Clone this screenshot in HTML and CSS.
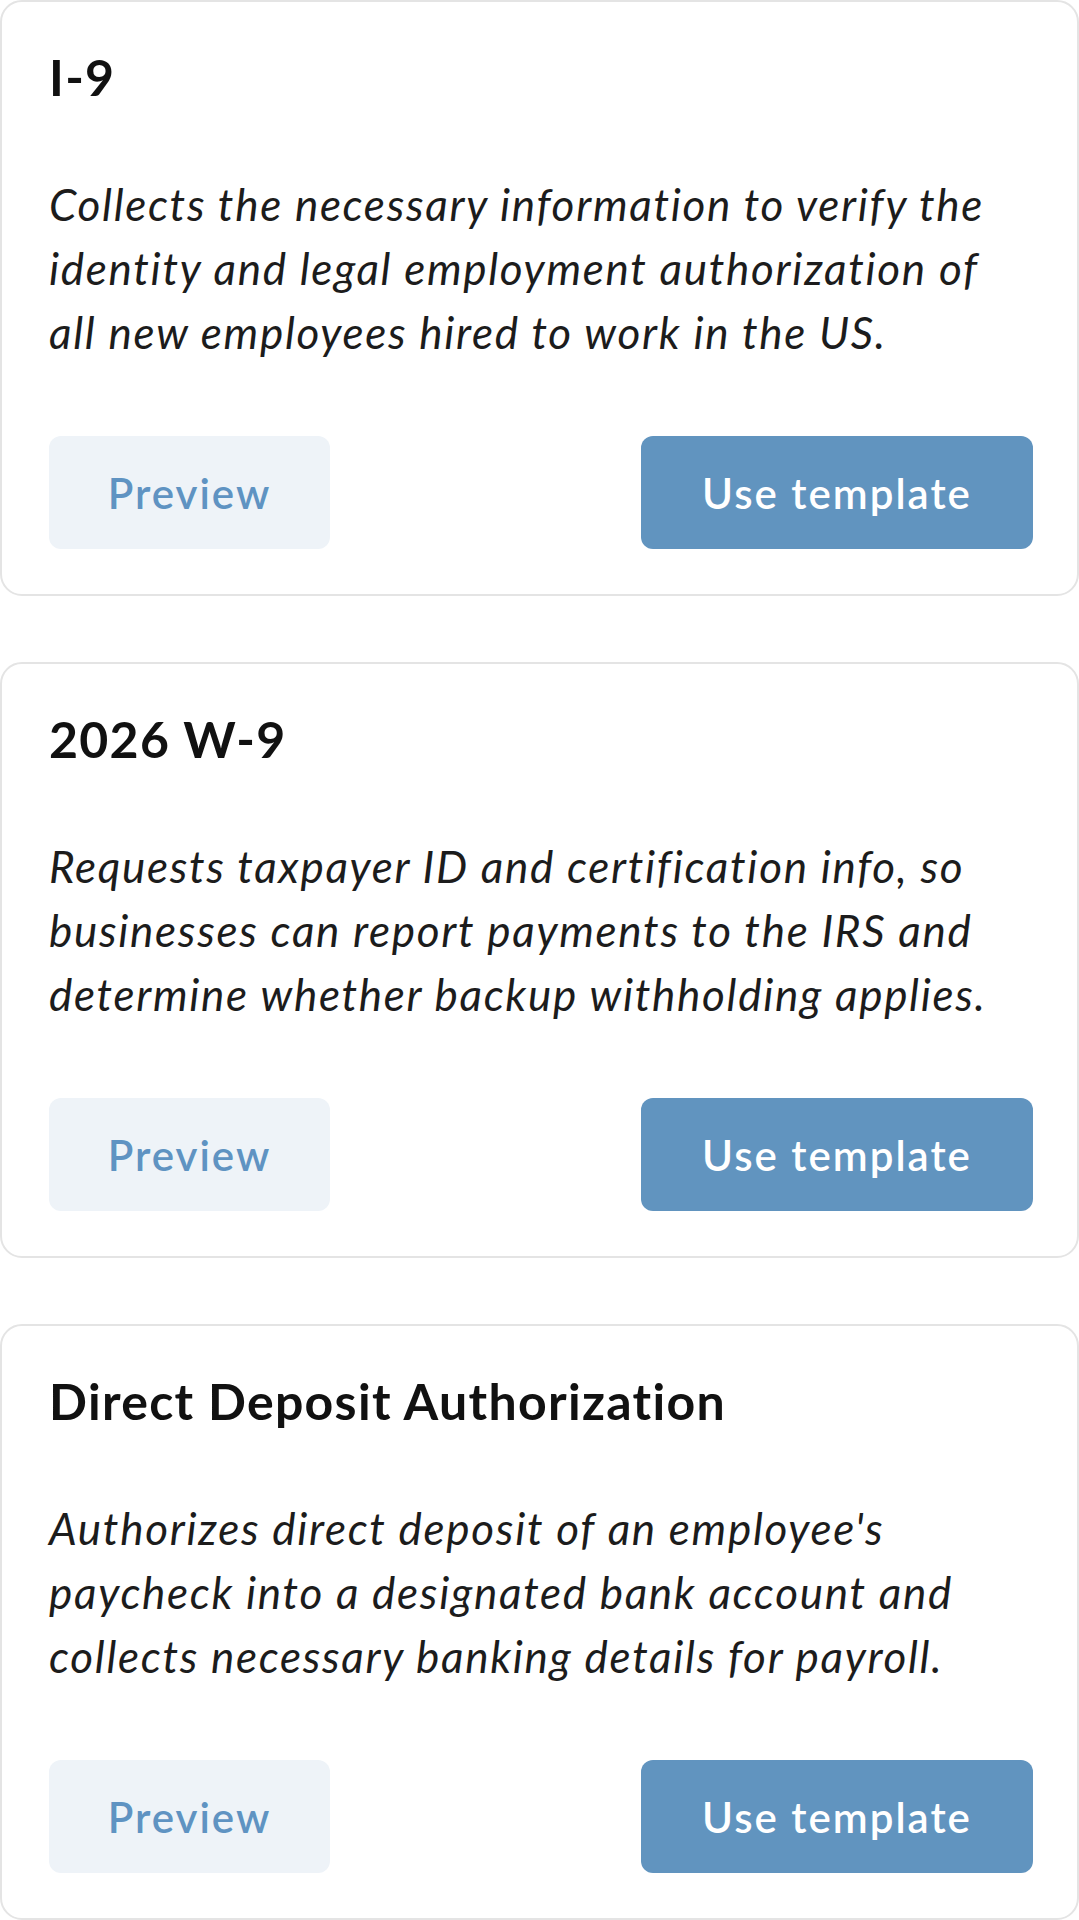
FILE: index.html
```html
<!DOCTYPE html>
<html lang="en">

<head>
    <meta charset="UTF-8">
    <meta name="viewport" content="width=device-width, initial-scale=1.0">
    <title>Templates</title>
    <link rel="stylesheet" href="styles.css">
</head>

<body>
    <div class="template-list">
        <div class="template-card">
            <h2 class="template-title">I-9</h2>
            <p class="template-desc">Collects the necessary information to verify the identity and legal employment authorization of all new employees hired to work in the US.</p>
            <div class="template-actions">
                <button class="btn-preview">Preview</button>
                <button class="btn-use">Use template</button>
            </div>
        </div>

        <div class="template-card">
            <h2 class="template-title">2026 W-9</h2>
            <p class="template-desc">Requests taxpayer ID and certification info, so businesses can report payments to the IRS and determine whether backup withholding applies.</p>
            <div class="template-actions">
                <button class="btn-preview">Preview</button>
                <button class="btn-use">Use template</button>
            </div>
        </div>

        <div class="template-card">
            <h2 class="template-title">Direct Deposit Authorization</h2>
            <p class="template-desc">Authorizes direct deposit of an employee's paycheck into a designated bank account and collects necessary banking details for payroll.</p>
            <div class="template-actions">
                <button class="btn-preview">Preview</button>
                <button class="btn-use">Use template</button>
            </div>
        </div>
    </div>
</body>

</html>
```

FILE: styles.css
```css
body {
    margin: 0;
    background-color: #ffffff;
    font-family: Lato, "Noto Sans", sans-serif;
    color: #111111;
}

.template-list {
    display: flex;
    flex-direction: column;
    gap: 66px;
}

.template-card {
    height: 596px;
    box-sizing: border-box;
    padding: 42px 44px 0 47px;
    border: 2px solid #e4e4e4;
    border-radius: 22px;
    background-color: #ffffff;
}

.template-title {
    margin: 0;
    font-size: 50px;
    line-height: 67px;
    font-weight: 700;
    letter-spacing: 1.3px;
}

.template-desc {
    margin: 61px 33px 0 0;
    font-size: 44px;
    line-height: 64px;
    font-style: italic;
    letter-spacing: 1.7px;
    color: #1c1c1c;
}

.template-actions {
    display: flex;
    justify-content: space-between;
    margin-top: 72px;
}

.template-actions button {
    height: 113px;
    border: none;
    border-radius: 12px;
    font-family: Lato, "Noto Sans", sans-serif;
    font-size: 42px;
    font-weight: 600;
    letter-spacing: 2px;
    cursor: pointer;
}

.btn-preview {
    width: 281px;
    background-color: #eef3f8;
    color: #5f93c2;
}

.btn-use {
    width: 392px;
    background-color: #6194bf;
    color: #ffffff;
}
```
